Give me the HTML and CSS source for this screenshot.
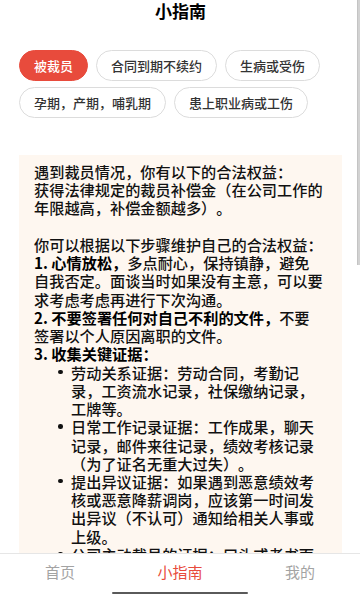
FILE: index.html
```
<!DOCTYPE html>
<html lang="zh-CN">
<head>
<meta charset="utf-8">
<meta name="viewport" content="width=device-width, initial-scale=1">
<title>小指南</title>
<link rel="stylesheet" href="styles.css">
</head>
<body>
<div class="page">
  <header class="title-bar">小指南</header>
  <nav class="chips">
    <span class="chip active">被裁员</span>
    <span class="chip">合同到期不续约</span>
    <span class="chip">生病或受伤</span>
    <span class="chip">孕期，产期，哺乳期</span>
    <span class="chip">患上职业病或工伤</span>
  </nav>
  <section class="guide">
    <p>遇到裁员情况，你有以下的合法权益：<br>获得法律规定的裁员补偿金（在公司工作的年限越高，补偿金额越多）。</p>
    <p class="gap">你可以根据以下步骤维护自己的合法权益：<br><b>1. 心情放松，</b>多点耐心，保持镇静，避免自我否定。面谈当时如果没有主意，可以要求考虑考虑再进行下次沟通。<br><b>2. 不要签署任何对自己不利的文件，</b>不要签署以个人原因离职的文件。<br><b>3. 收集关键证据：</b></p>
    <ul class="list">
      <li>劳动关系证据：劳动合同，考勤记录，工资流水记录，社保缴纳记录，工牌等。</li>
      <li>日常工作记录证据：工作成果，聊天记录，邮件来往记录，绩效考核记录（为了证名无重大过失）。</li>
      <li>提出异议证据：如果遇到恶意绩效考核或恶意降薪调岗，应该第一时间发出异议（不认可）通知给相关人事或上级。</li>
      <li>公司主动裁员的证据：口头或者书面通知，录音，聊天记录等。</li>
    </ul>
  </section>
</div>
<div class="scroll-thumb"></div>
<footer class="tabbar">
  <div class="tabs">
    <span class="tab">首页</span>
    <span class="tab current">小指南</span>
    <span class="tab">我的</span>
  </div>
  <div class="home-bar"></div>
</footer>
</body>
</html>
```
FILE: styles.css
```
html, body {
  margin: 0;
  padding: 0;
  background: #ffffff;
  overflow: hidden;
  height: 600px;
}
body {
  font-family: "Noto Sans CJK SC", "Noto Sans", sans-serif;
  color: #111;
  text-spacing-trim: space-all;
}
.page {
  padding: 0 18px 0 19px;
}
.title-bar {
  text-align: center;
  font-size: 17px;
  font-weight: 700;
  line-height: 22px;
  color: #000;
}
.chips {
  margin-top: 28px;
  display: flex;
  flex-wrap: wrap;
  column-gap: 8px;
  row-gap: 6px;
}
.chip {
  box-sizing: border-box;
  height: 31px;
  line-height: 29px;
  padding: 0 14px;
  border: 1px solid #dcdcdc;
  border-radius: 16px;
  font-size: 13px;
  font-weight: 500;
  color: #333;
  background: #fff;
  white-space: nowrap;
}
.chip.active {
  background: #e84b3c;
  border-color: #e84b3c;
  color: #fff;
}
.guide {
  margin-top: 37px;
  background: #fef7f0;
  padding: 7px 18.5px 40px 15px;
  width: 289.5px;
  font-size: 15.2px;
  font-weight: 500;
  line-height: 18.24px;
  color: #111;
}
.guide p {
  margin: 0;
}
.guide p.gap {
  margin-top: 18.24px;
}
.guide b {
  font-weight: 700;
  color: #000;
}
.list {
  margin: 0;
  padding: 0 0 0 37px;
  list-style: none;
}
.list li {
  position: relative;
}
.list li::before {
  content: "";
  position: absolute;
  left: -13px;
  top: 7px;
  width: 4.5px;
  height: 4.5px;
  border-radius: 50%;
  background: #111;
}
.scroll-thumb {
  position: fixed;
  top: 0;
  right: 0;
  width: 3px;
  height: 265px;
  background: #d2d2d2;
  border-left: 1px solid #c4c4c4;
  box-sizing: border-box;
}
.tabbar {
  position: fixed;
  left: 0;
  right: 0;
  bottom: 0;
  height: 47px;
  background: #fff;
  border-top: 1px solid #e6e6e6;
  box-sizing: border-box;
  display: flex;
  flex-direction: column;
  align-items: center;
}
.tabs {
  width: 100%;
  display: grid;
  grid-template-columns: 1fr 1fr 1fr;
  padding-top: 8px;
}
.tab {
  text-align: center;
  font-size: 15px;
  line-height: 20px;
  color: #a3a3a3;
}
.tab.current {
  color: #e84b3c;
}
.home-bar {
  margin-top: 10px;
  width: 136px;
  height: 2px;
  border-radius: 1px;
  background: #5a5a5a;
}
```
